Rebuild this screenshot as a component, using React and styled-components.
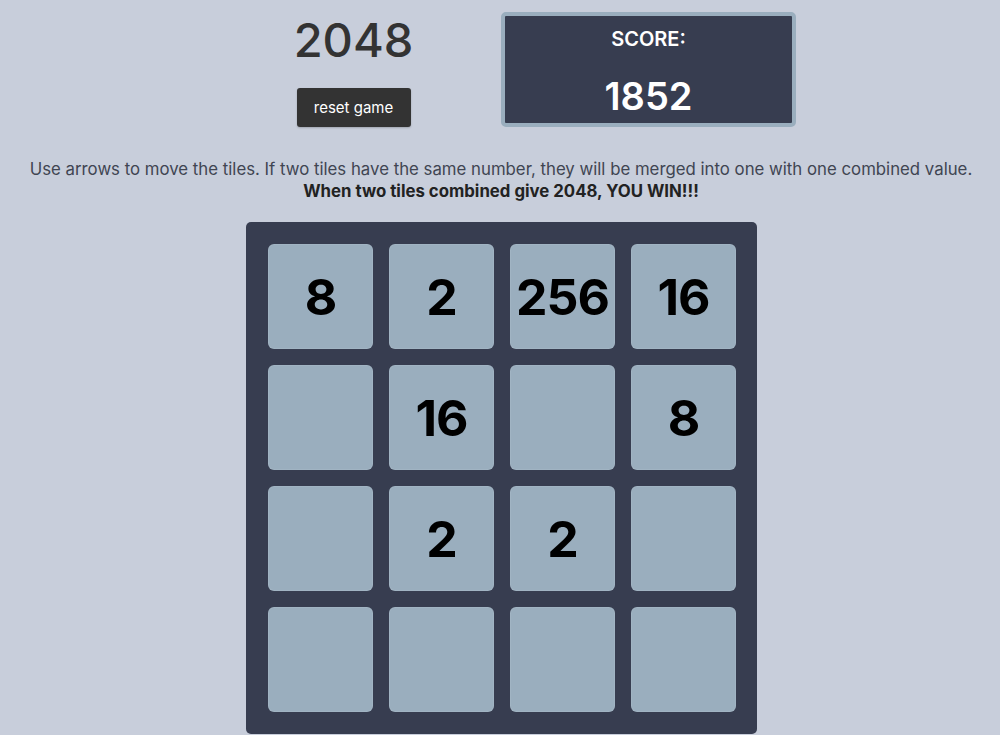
import React from "react";
import styled, { createGlobalStyle } from "styled-components";

const Global = createGlobalStyle`
  html, body { margin: 0; padding: 0; }
  body {
    background: #c8cedb;
    font-family: Inter, "Noto Sans", sans-serif;
    color: #333;
  }
`;

const Page = styled.div`
  display: flex;
  flex-direction: column;
  align-items: center;
  padding-top: 12px;
  padding-left: 2px;
`;

const Header = styled.div`
  display: grid;
  grid-template-columns: 295px 295px;
  height: 115px;
`;

const LeftCol = styled.div`
  display: flex;
  flex-direction: column;
  align-items: center;
  justify-content: space-between;
`;

const Title = styled.h1`
  margin: 0;
  margin-top: 2px;
  font-size: 47px;
  font-weight: 500;
  line-height: 52px;
  color: #333;
`;

const ResetButton = styled.button`
  width: 114px;
  height: 39px;
  border: none;
  border-radius: 3px;
  background: #333333;
  color: #fff;
  font-family: Inter, "Noto Sans", sans-serif;
  font-size: 15px;
  padding: 0;
  box-shadow: 0 1px 2px rgba(0,0,0,0.2);
`;

const ScoreBox = styled.div`
  box-sizing: border-box;
  border: 4px solid #9aaebe;
  border-radius: 5px;
  background: #373d50;
  color: #fff;
  display: flex;
  flex-direction: column;
  align-items: center;
  justify-content: space-between;
  padding: 10px 0 5px;
`;

const ScoreLabel = styled.div`
  font-size: 20px;
  font-weight: 600;
  line-height: 26px;
`;

const ScoreValue = styled.div`
  font-size: 38px;
  font-weight: 600;
  line-height: 44px;
`;

const Info = styled.p`
  margin: 31px 0 0;
  text-align: center;
  font-size: 16.8px;
  line-height: 22px;
  color: #404552;
`;

const Strong = styled.strong`
  font-weight: 700;
  color: #222;
`;

const Board = styled.div`
  margin-top: 20px;
  margin-left: 1px;
  box-sizing: border-box;
  width: 511px;
  padding: 22px 21px 22px 22px;
  background: #373d50;
  border-radius: 5px;
  display: grid;
  grid-template-columns: repeat(4, 105px);
  grid-auto-rows: 105px;
  gap: 16px;
`;

const Tile = styled.div`
  background: #9aaebe;
  border-radius: 6px;
  display: flex;
  align-items: center;
  justify-content: center;
  font-family: Inter, "Noto Sans", sans-serif;
  font-weight: 700;
  font-size: 50px;
  letter-spacing: -1px;
  color: #000;
  box-shadow: inset 0 0 0 1px rgba(255,255,255,0.08);
`;

const cells = [
  8, 2, 256, 16,
  null, 16, null, 8,
  null, 2, 2, null,
  null, null, null, null,
];

export default function App() {
  return (
    <>
      <Global />
      <Page>
        <Header>
          <LeftCol>
            <Title>2048</Title>
            <ResetButton>reset game</ResetButton>
          </LeftCol>
          <ScoreBox>
            <ScoreLabel>SCORE:</ScoreLabel>
            <ScoreValue>1852</ScoreValue>
          </ScoreBox>
        </Header>
        <Info>
          Use arrows to move the tiles. If two tiles have the same number, they will be merged into one with one combined value.
          <br />
          <Strong>When two tiles combined give 2048, YOU WIN!!!</Strong>
        </Info>
        <Board>
          {cells.map((v, i) => (
            <Tile key={i}>{v ?? ""}</Tile>
          ))}
        </Board>
      </Page>
    </>
  );
}
